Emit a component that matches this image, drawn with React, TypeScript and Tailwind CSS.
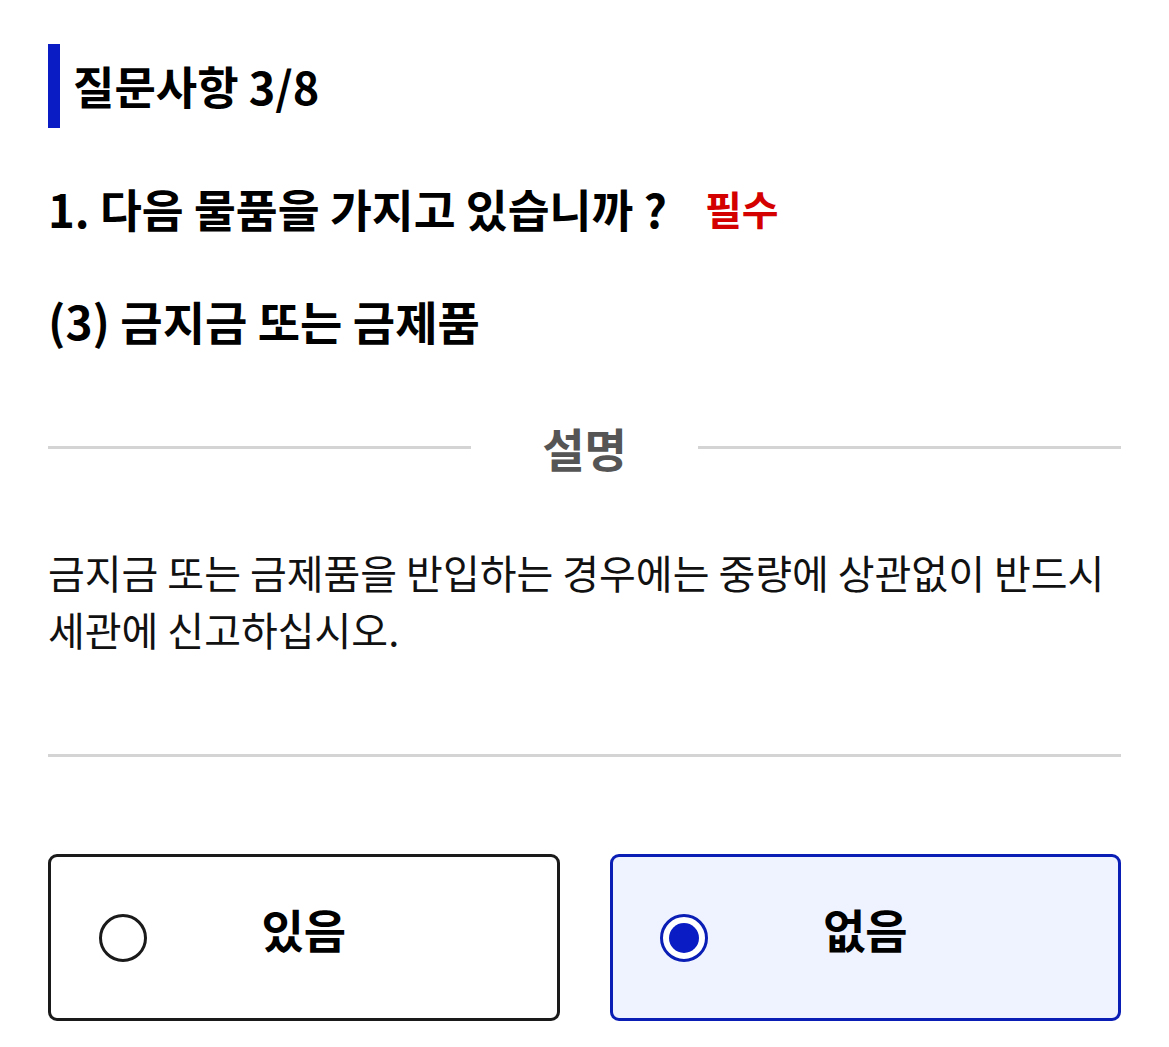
import React from "react";

const font = { fontFamily: '"Noto Sans CJK KR", "Noto Sans", sans-serif' };

export default function App() {
  return (
    <div className="bg-white min-h-[1047px] px-12 pt-11 text-black" style={font}>
      <div className="flex items-stretch h-[84px]">
        <div className="w-3 bg-[#0a1dc4]" />
        <h1 className="ml-[13px] text-[45px] font-bold leading-[84px]">질문사항 3/8</h1>
      </div>

      <div className="mt-[50px] flex items-center h-[60px]">
        <span className="text-[45.5px] font-bold">1. 다음 물품을 가지고 있습니까 ?</span>
        <span className="ml-[38px] text-[40px] font-bold text-[#d40000]">필수</span>
      </div>

      <div className="mt-[52px] h-[60px] flex items-center">
        <span className="text-[46px] font-bold">(3) 금지금 또는 금제품</span>
      </div>

      <div className="mt-[67px] h-[60px] flex items-center">
        <div className="flex-1 h-[3px] bg-[#d4d4d4]" />
        <span className="w-[227px] text-center text-[46px] font-bold text-[#555555]">설명</span>
        <div className="flex-1 h-[3px] bg-[#d4d4d4]" />
      </div>

      <p className="mt-[67px] text-[40px] leading-[57px] text-[#111]">
        금지금 또는 금제품을 반입하는 경우에는 중량에 상관없이 반드시 세관에 신고하십시오.
      </p>

      <div className="mt-[96px] h-[3px] bg-[#d4d4d4]" />

      <div className="mt-[97px] grid grid-cols-2 gap-[50px]">
        <div className="relative h-[167px] rounded-[9px] border-[3px] border-[#1a1a1a] bg-white flex items-center justify-center">
          <div className="absolute left-[48px] top-1/2 -translate-y-1/2 w-[48px] h-[48px] rounded-full border-[3px] border-[#1a1a1a]" />
          <span className="mb-[18px] text-[46px] font-bold">있음</span>
        </div>
        <div className="relative h-[167px] rounded-[9px] border-[3px] border-[#0a1db5] bg-[#eef3ff] flex items-center justify-center">
          <div className="absolute left-[47px] top-1/2 -translate-y-1/2 w-[48px] h-[48px] rounded-full border-[3px] border-[#0a1db5] flex items-center justify-center bg-white">
            <div className="w-[30px] h-[30px] rounded-full bg-[#0a1dc4]" />
          </div>
          <span className="mb-[18px] text-[46px] font-bold">없음</span>
        </div>
      </div>
    </div>
  );
}
